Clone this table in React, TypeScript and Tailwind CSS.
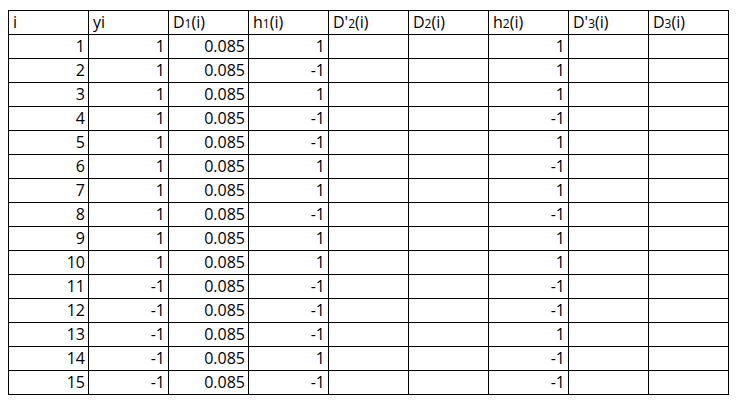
import React from 'react';

type Row = { i: number; yi: number; d1: string; h1: number; h2: number };

const rows: Row[] = [
    { i: 1, yi: 1, d1: '0.085', h1: 1, h2: 1 },
    { i: 2, yi: 1, d1: '0.085', h1: -1, h2: 1 },
    { i: 3, yi: 1, d1: '0.085', h1: 1, h2: 1 },
    { i: 4, yi: 1, d1: '0.085', h1: -1, h2: -1 },
    { i: 5, yi: 1, d1: '0.085', h1: -1, h2: 1 },
    { i: 6, yi: 1, d1: '0.085', h1: 1, h2: -1 },
    { i: 7, yi: 1, d1: '0.085', h1: 1, h2: 1 },
    { i: 8, yi: 1, d1: '0.085', h1: -1, h2: -1 },
    { i: 9, yi: 1, d1: '0.085', h1: 1, h2: 1 },
    { i: 10, yi: 1, d1: '0.085', h1: 1, h2: 1 },
    { i: 11, yi: -1, d1: '0.085', h1: -1, h2: -1 },
    { i: 12, yi: -1, d1: '0.085', h1: -1, h2: -1 },
    { i: 13, yi: -1, d1: '0.085', h1: -1, h2: 1 },
    { i: 14, yi: -1, d1: '0.085', h1: 1, h2: -1 },
    { i: 15, yi: -1, d1: '0.085', h1: -1, h2: -1 },
];

const Sub = ({ children }: { children: React.ReactNode }) => (
    <span className="text-[12px]">{children}</span>
);

const headers: React.ReactNode[] = [
    'i',
    'yi',
    <>D<Sub>1</Sub>(i)</>,
    <>h<Sub>1</Sub>(i)</>,
    <>D'<Sub>2</Sub>(i)</>,
    <>D<Sub>2</Sub>(i)</>,
    <>h<Sub>2</Sub>(i)</>,
    <>D'<Sub>3</Sub>(i)</>,
    <>D<Sub>3</Sub>(i)</>,
];

const cell = 'h-[24px] border-r border-b border-black leading-[23px] whitespace-nowrap overflow-hidden';

const App: React.FC = () => {
    return (
        <div className="min-h-screen bg-white pt-[10px] pl-[8px] text-black" style={{ fontFamily: '"Open Sans", "Liberation Sans", sans-serif' }}>
            <div className="grid w-max grid-cols-[repeat(9,80px)] border-l border-t border-black text-[16px]">
                {headers.map((h, idx) => (
                    <div key={idx} className={`${cell} pl-[4px] text-left`}>{h}</div>
                ))}
                {rows.map(r => (
                    <React.Fragment key={r.i}>
                        <div className={`${cell} pr-[3px] text-right`}>{r.i}</div>
                        <div className={`${cell} pr-[3px] text-right`}>{r.yi}</div>
                        <div className={`${cell} pr-[3px] text-right`}>{r.d1}</div>
                        <div className={`${cell} pr-[3px] text-right`}>{r.h1}</div>
                        <div className={cell}></div>
                        <div className={cell}></div>
                        <div className={`${cell} pr-[3px] text-right`}>{r.h2}</div>
                        <div className={cell}></div>
                        <div className={cell}></div>
                    </React.Fragment>
                ))}
            </div>
        </div>
    );
};

export default App;
